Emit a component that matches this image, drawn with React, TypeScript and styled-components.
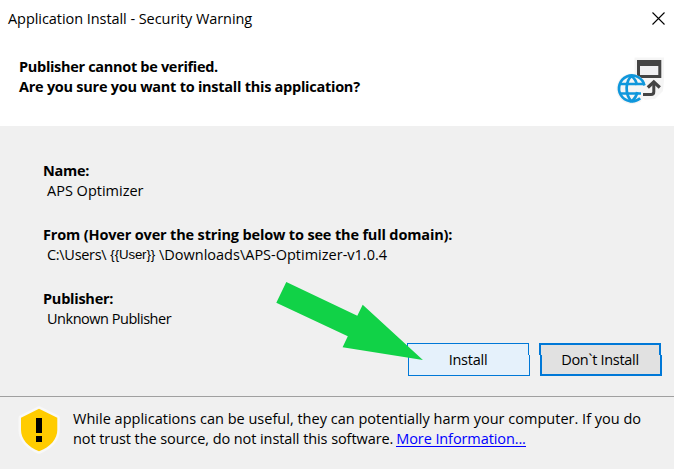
import React from "react";
import styled, { createGlobalStyle } from "styled-components";

const GlobalStyle = createGlobalStyle`
  body {
    margin: 0;
    background: #fff;
    font-family: "Open Sans", sans-serif;
    font-size: 14.5px;
    line-height: 20px;
    color: #000;
  }
`;

const Text = styled.span<{ $track?: number; $bold?: boolean }>`
  display: inline-block;
  white-space: pre;
  font-weight: ${(p) => (p.$bold ? 700 : 400)};
  letter-spacing: ${(p) => p.$track ?? 0}px;
`;

const Dialog = styled.div`
  position: relative;
  display: flex;
  flex-direction: column;
  width: 674px;
  height: 469px;
  overflow: hidden;
  background: #f0f0f0;
`;

const TitleBar = styled.header`
  display: flex;
  justify-content: space-between;
  height: 48px;
  box-sizing: border-box;
  padding: 9px 9.5px 0 8px;
  background: #fff;
`;

const CloseButton = styled.button`
  width: 13px;
  height: 13px;
  margin-top: 3px;
  padding: 0;
  border: 0;
  background: none;
  svg {
    display: block;
  }
`;

const Banner = styled.section`
  display: flex;
  justify-content: space-between;
  height: 78px;
  box-sizing: border-box;
  padding: 9px 10px 0 19px;
  background: #fff;
`;

const Question = styled.div`
  display: flex;
  flex-direction: column;
`;

const InstallerIcon = styled.svg`
  width: 50px;
  height: 50px;
  margin-top: -2px;
`;

const Details = styled.section`
  display: flex;
  flex-direction: column;
  gap: 24px;
  height: 217px;
  box-sizing: border-box;
  padding: 35px 0 0 43px;
`;

const Field = styled.div`
  display: flex;
  flex-direction: column;
`;

const Value = styled.div`
  display: flex;
  padding-left: 4px;
`;

const UserToken = styled.span`
  margin: 0 4px 0 4px;
  font-family: "Liberation Sans", sans-serif;
  font-size: 13.3px;
  letter-spacing: -0.15px;
`;

const Actions = styled.div`
  display: flex;
  gap: 10px;
  justify-content: flex-end;
  height: 54px;
  box-sizing: border-box;
  padding-right: 12px;
  border-bottom: 1px solid #a0a0a0;
`;

const ActionButton = styled.button<{ $fill: string; $border: number }>`
  position: relative;
  width: 122px;
  height: 33px;
  padding: 1px 2px 0 0;
  border: 0;
  background: none;
  font: inherit;
  color: #000;
  &::before,
  &::after {
    content: "";
    position: absolute;
    left: 0;
    width: 122px;
    box-sizing: border-box;
    border: ${(p) => p.$border}px solid #0078d7;
    background: ${(p) => p.$fill};
  }
  &::before {
    top: 0;
    left: -1px;
    height: 12px;
    border-bottom: 0;
  }
  &::after {
    top: 12px;
    height: 21px;
    border-top: 0;
  }
  & > span {
    position: relative;
    z-index: 1;
  }
`;

const Footer = styled.footer`
  display: flex;
  padding: 8px 0 0 18px;
`;

const Shield = styled.svg`
  width: 42px;
  height: 49px;
  margin-right: 13px;
`;

const Notice = styled.div`
  padding-top: 4px;
`;

const Line = styled.div`
  display: flex;
`;

const MoreLink = styled.a`
  height: 18px;
  line-height: 20px;
  margin-left: 3px;
  color: #0000ff;
  border-bottom: 1px solid #0000ff;
  box-sizing: border-box;
`;

const Pointer = styled.svg`
  position: absolute;
  left: 270px;
  top: 276px;
  z-index: 2;
  pointer-events: none;
`;

export default function App() {
  return (
    <>
      <GlobalStyle />
      <Dialog>
        <TitleBar>
          <Text $track={-0.06}>Application Install - Security Warning</Text>
          <CloseButton aria-label="Close">
            <svg width="13" height="13" viewBox="0 0 13 13">
              <path d="M.5.5l12 12M12.5.5l-12 12" stroke="#000" strokeWidth="1.1" />
            </svg>
          </CloseButton>
        </TitleBar>

        <Banner>
          <Question>
            <Text $bold $track={-0.31}>Publisher cannot be verified.</Text>
            <Text $bold $track={-0.26}>Are you sure you want to install this application?</Text>
          </Question>
          <InstallerIcon viewBox="614 55 50 50">
            <path d="M634.500 57.500H664V80l-1 11-8 8-10 1-6-4-4.500-16z" fill="#f5f5f5" />
            <circle cx="631.700" cy="88.700" r="15.300" fill="#f5f5f5" />
            <path d="M637 60h24.300v18H637z" fill="#444" />
            <path d="M640 66h18.300v9H640z" fill="#f0f0f2" />
            <path
              d="M631.700 74.300a14.300 14.300 0 0 1 14.300 12.500h-5v15h-9z"
              fill="#f5f5f5"
            />
            <g fill="none" stroke="#0f97dc" strokeWidth="2.700">
              <path d="M644.400 85.300A12.900 12.900 0 1 0 640.200 98.300" />
              <path d="M620.500 84h24.500M620.500 93.500H641" />
              <path d="M631.500 76c-6 5-7 18 0 25.500M631.500 76c3 2.500 5 6 5.300 9M637.200 92c-.5 4-2.700 7-5.700 9.500" />
            </g>
            <path d="M643 94.500h8q2.800 0 2.800-2.800V82" fill="none" stroke="#444" strokeWidth="3" />
            <path d="M647.800 87.500l6-5.500 6 5.500" fill="none" stroke="#444" strokeWidth="3.200" />
          </InstallerIcon>
        </Banner>

        <Details>
          <Field>
            <Text $bold $track={-0.25}>Name:</Text>
            <Value><Text>APS Optimizer</Text></Value>
          </Field>
          <Field>
            <Text $bold $track={-0.16}>From (Hover over the string below to see the full domain):</Text>
            <Value>
              <Text $track={-0.3}>{"C:\\Users\\"}</Text>
              <UserToken>{"{{User}}"}</UserToken>
              <Text>{"\\Downloads\\APS-Optimizer-v1.0.4"}</Text>
            </Value>
          </Field>
          <Field>
            <Text $bold $track={-0.25}>Publisher:</Text>
            <Value><Text $track={-0.48}>Unknown Publisher</Text></Value>
          </Field>
        </Details>

        <Actions>
          <ActionButton $fill="#e5f1fb" $border={1}>
            <Text $track={-0.25}>Install</Text>
          </ActionButton>
          <ActionButton $fill="#e1e1e1" $border={2}>
            <Text $track={-0.3}>Don`t Install</Text>
          </ActionButton>
        </Actions>

        <Footer>
          <Shield viewBox="18 405 42 49">
            <path
              d="M39 408.700l18.300 9V430c0 9-7 17-18.300 21.300C28 447 21 439 21 430v-12.300z"
              fill="#f8f8f8"
              stroke="#f8f8f8"
              strokeWidth="5"
              strokeLinejoin="round"
            />
            <path d="M39 408.700l18.300 9V430c0 9-7 17-18.300 21.300C28 447 21 439 21 430v-12.300z" fill="#ffcc00" />
            <path d="M36 418h6v15h-6zM36 436h6v6h-6z" fill="#000" />
          </Shield>
          <Notice>
            <Line>
              <Text $track={0.01}>
                While applications can be useful, they can potentially harm your computer. If you do
              </Text>
            </Line>
            <Line>
              <Text $track={-0.08}>not trust the source, do not install this software.</Text>
              <MoreLink>
                <Text $track={-0.1}>More Information...</Text>
              </MoreLink>
            </Line>
          </Notice>
        </Footer>

        <Pointer width="160" height="90" viewBox="270 276 160 90">
          <path
            d="M286.300 282L357.300 315.700 362.700 304.800 422.900 360 342.600 347.300 347.800 336.300 276.300 302.700z"
            fill="#11d247"
          />
        </Pointer>
      </Dialog>
    </>
  );
}
